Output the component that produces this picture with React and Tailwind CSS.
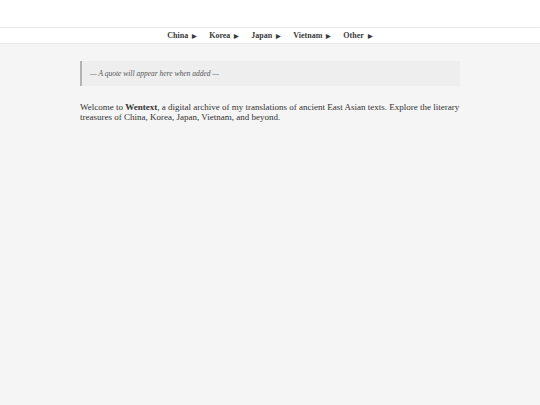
import React from 'react';

const regions = ['China', 'Korea', 'Japan', 'Vietnam', 'Other'];

export default function App() {
    return (
        <div className="min-h-[405px] w-full bg-[#f5f5f5] text-[#333] font-['Liberation_Serif',Georgia,serif]">
            {/* Site header */}
            <header className="h-[27px] bg-white shadow-[0_1px_2px_rgba(0,0,0,0.08)]"></header>

            {/* Region nav */}
            <nav className="mt-px h-[16px] bg-white border-b border-[#ececec] flex items-center justify-center gap-[12px]">
                {regions.map(r => (
                    <span key={r} className="text-[8px] font-bold text-[#3a3a3a] flex items-center gap-[4px] leading-none">
                        {r}
                        <span className="text-[6px]">▶</span>
                    </span>
                ))}
            </nav>

            <main className="w-[380px] mx-auto pt-[17px]">
                {/* Quote placeholder */}
                <div className="h-[25px] bg-[#eeeeee] border-l-2 border-[#b3b3b3] flex items-center pl-[8px]">
                    <p className="text-[7.5px] italic text-[#555]">— A quote will appear here when added —</p>
                </div>

                <p className="mt-[16px] text-[9px] leading-[10px] text-[#333]">
                    Welcome to <strong className="font-bold">Wentext</strong>, a digital archive of my translations of ancient East Asian texts. Explore the literary treasures of China, Korea, Japan, Vietnam, and beyond.
                </p>
            </main>
        </div>
    );
}
